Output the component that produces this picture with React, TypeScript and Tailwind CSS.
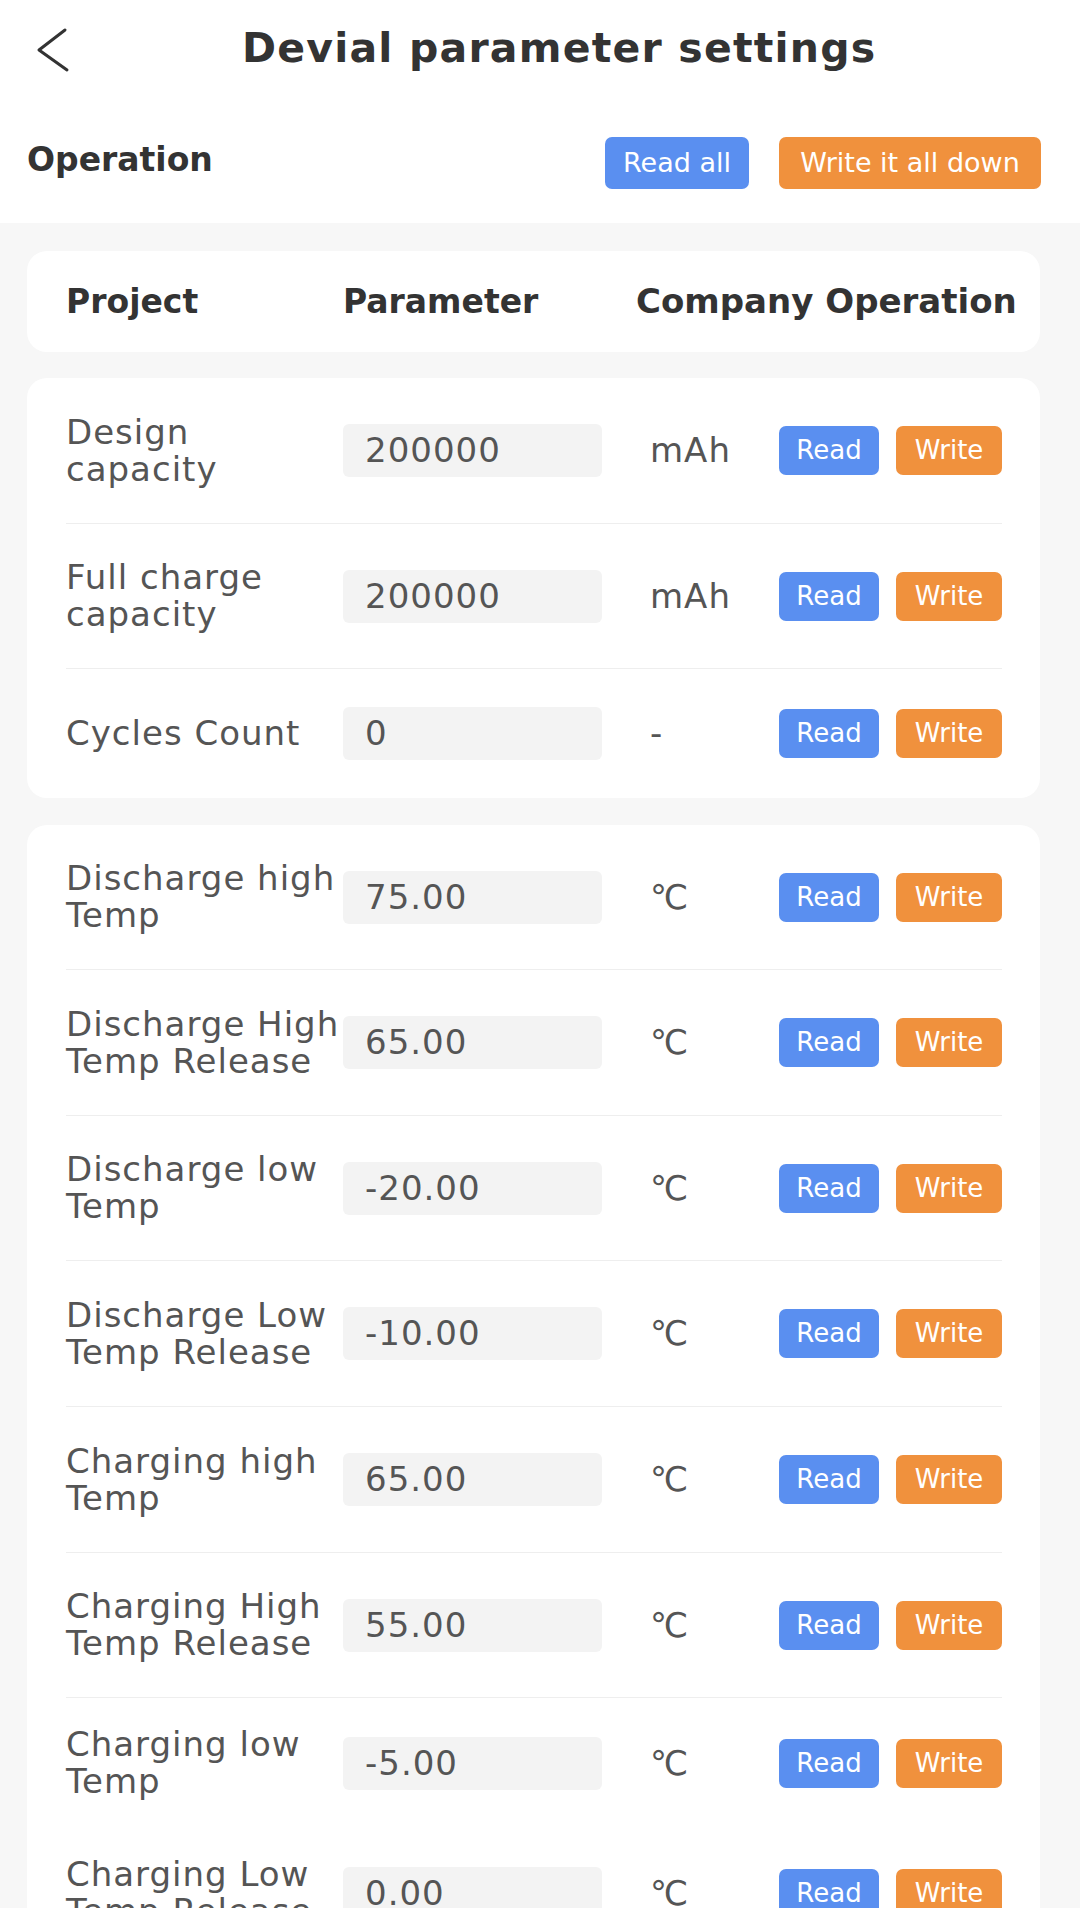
import React from "react";

type Row = {
  label: string[];
  value: string;
  unit: string;
  h: string;
  line?: boolean;
};

const capacityRows: Row[] = [
  { label: ["Design", "capacity"], value: "200000", unit: "mAh", h: "h-[146px]", line: true },
  { label: ["Full charge", "capacity"], value: "200000", unit: "mAh", h: "h-[145px]", line: true },
  { label: ["Cycles Count"], value: "0", unit: "-", h: "h-[129px]" },
];

const tempRows: Row[] = [
  { label: ["Discharge high", "Temp"], value: "75.00", unit: "℃", h: "h-[145px]", line: true },
  { label: ["Discharge High", "Temp Release"], value: "65.00", unit: "℃", h: "h-[146px]", line: true },
  { label: ["Discharge low", "Temp"], value: "-20.00", unit: "℃", h: "h-[145px]", line: true },
  { label: ["Discharge Low", "Temp Release"], value: "-10.00", unit: "℃", h: "h-[146px]", line: true },
  { label: ["Charging high", "Temp"], value: "65.00", unit: "℃", h: "h-[146px]", line: true },
  { label: ["Charging High", "Temp Release"], value: "55.00", unit: "℃", h: "h-[145px]", line: true },
  { label: ["Charging low", "Temp"], value: "-5.00", unit: "℃", h: "h-[130px]" },
  { label: ["Charging Low", "Temp Release"], value: "0.00", unit: "℃", h: "h-[130px]" },
];

function ParamRow({ row }: { row: Row }) {
  return (
    <div className={`${row.h} flex items-center shrink-0 ${row.line ? "border-b border-[#eeeeee]" : ""}`}>
      <div className="w-[277px] shrink-0 whitespace-nowrap text-[34px] leading-[37px] tracking-[1px] text-[#555555]">
        {row.label.map((l) => (
          <div key={l}>{l}</div>
        ))}
      </div>
      <div className="w-[259px] h-[53px] shrink-0 rounded-[6px] bg-[#f3f3f3] flex items-center pl-[22px] text-[34px] tracking-[1px] text-[#555555]">
        {row.value}
      </div>
      <div className="ml-[48px] text-[34px] tracking-[1px] text-[#555555]">{row.unit}</div>
      <div className="ml-auto flex gap-[17px]">
        <button className="w-[100px] h-[49px] rounded-[7px] bg-[#5a8ff0] text-white text-[26px]">Read</button>
        <button className="w-[106px] h-[49px] rounded-[7px] bg-[#f0913d] text-white text-[26px]">Write</button>
      </div>
    </div>
  );
}

export default function App() {
  return (
    <div className="w-[1080px] h-[1920px] flex flex-col bg-white overflow-hidden font-['DejaVu_Sans',sans-serif]">
      <div className="h-[223px] shrink-0 bg-white flex flex-col">
        <div className="h-[98px] flex items-center">
          <svg className="ml-[34px] shrink-0" width="36" height="48" viewBox="0 0 36 48" fill="none">
            <path d="M31 5 L5 25 L33 45" stroke="#333333" strokeWidth="3" strokeLinecap="round" strokeLinejoin="round" />
          </svg>
          <h1 className="ml-[172px] text-[41px] font-bold tracking-[1.2px] text-[#333333] whitespace-nowrap">
            Devial parameter settings
          </h1>
        </div>
        <div className="h-[125px] flex items-start pt-[39px] pl-[27px] pr-[39px]">
          <div className="text-[33px] leading-[46px] font-bold text-[#333333]">Operation</div>
          <div className="ml-auto flex gap-[30px]">
            <button className="w-[144px] h-[52px] rounded-[7px] bg-[#5a8ff0] text-white text-[27px]">Read all</button>
            <button className="w-[262px] h-[52px] rounded-[7px] bg-[#f0913d] text-white text-[27px]">Write it all down</button>
          </div>
        </div>
      </div>

      <div className="flex-1 bg-[#f7f7f7] pl-[27px] pr-[40px] pt-[28px] overflow-hidden">
        <div className="h-[101px] rounded-[20px] bg-white flex items-center pl-[39px] text-[33px] font-bold text-[#333333] whitespace-nowrap">
          <div className="w-[277px] shrink-0">Project</div>
          <div className="w-[293px] shrink-0">Parameter</div>
          <div className="text-[34px]">Company Operation</div>
        </div>

        <div className="mt-[26px] rounded-[20px] bg-white pl-[39px] pr-[38px] flex flex-col">
          {capacityRows.map((r) => (
            <ParamRow key={r.label.join(" ")} row={r} />
          ))}
        </div>

        <div className="mt-[27px] rounded-[20px] bg-white pl-[39px] pr-[38px] flex flex-col">
          {tempRows.map((r) => (
            <ParamRow key={r.label.join(" ")} row={r} />
          ))}
        </div>
      </div>

      <div className="h-[12px] shrink-0 bg-white" />
    </div>
  );
}
